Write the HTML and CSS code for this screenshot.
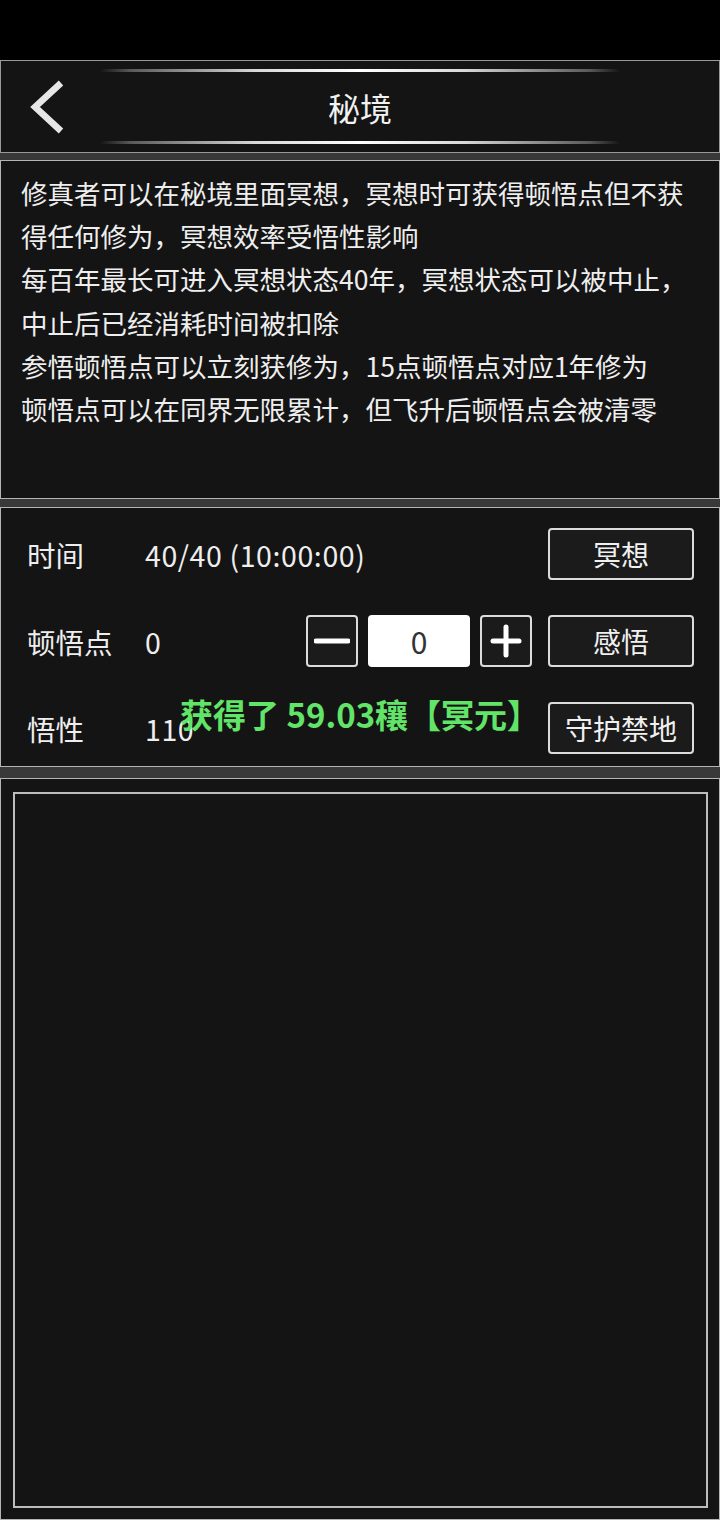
FILE: index.html
```html
<!DOCTYPE html>
<html lang="zh-CN">
<head>
    <meta charset="UTF-8">
    <meta name="viewport" content="width=device-width, initial-scale=1.0">
    <title>秘境</title>
    <link rel="stylesheet" href="styles.css">
</head>
<body>
    <!-- Status bar -->
    <div class="status-bar"></div>

    <div class="page">
        <!-- Title -->
        <header class="panel title-bar">
            <div class="glow-line"></div>
            <div class="title-row">
                <a class="back-btn" href="#">
                    <svg width="38" height="54" viewBox="0 0 38 54">
                        <polyline points="33,3 7,27 33,51" fill="none" stroke="#e6e6e6" stroke-width="6.5"/>
                    </svg>
                </a>
                <h1 class="title">秘境</h1>
                <span></span>
            </div>
            <div class="glow-line"></div>
        </header>

        <!-- Rules -->
        <section class="panel info">
            <p>
                修真者可以在秘境里面冥想，冥想时可获得顿悟点但不获<br>
                得任何修为，冥想效率受悟性影响<br>
                每百年最长可进入冥想状态40年，冥想状态可以被中止，<br>
                中止后已经消耗时间被扣除<br>
                参悟顿悟点可以立刻获修为，15点顿悟点对应1年修为<br>
                顿悟点可以在同界无限累计，但飞升后顿悟点会被清零
            </p>
        </section>

        <!-- Controls -->
        <section class="panel controls">
            <div class="row">
                <span class="label">时间</span>
                <span class="value">40/40 (10:00:00)</span>
                <button class="btn">冥想</button>
            </div>
            <div class="row">
                <span class="label">顿悟点</span>
                <span class="value">0</span>
                <div class="stepper">
                    <button class="step-btn">
                        <svg width="36" height="36" viewBox="0 0 36 36"><line x1="2" y1="18" x2="34" y2="18" stroke="#fff" stroke-width="5" stroke-linecap="round"/></svg>
                    </button>
                    <input class="count" type="text" value="0">
                    <button class="step-btn">
                        <svg width="36" height="36" viewBox="0 0 36 36"><line x1="5" y1="18" x2="31" y2="18" stroke="#fff" stroke-width="5" stroke-linecap="round"/><line x1="18" y1="4" x2="18" y2="32" stroke="#fff" stroke-width="5" stroke-linecap="round"/></svg>
                    </button>
                </div>
                <button class="btn">感悟</button>
            </div>
            <div class="row">
                <span class="label">悟性</span>
                <span class="value">110</span>
                <button class="btn">守护禁地</button>
            </div>

            <div class="toast">获得了 59.03穰【冥元】</div>
        </section>

        <!-- Log -->
        <section class="panel log">
            <div class="log-box"></div>
        </section>
    </div>
</body>
</html>
```

FILE: styles.css
```css
/* Base */
body {
    margin: 0;
    background-color: #000;
    color: #eee;
    font-family: "Noto Sans CJK SC", "Noto Sans", sans-serif;
}
.status-bar {
    height: 60px;
    background-color: #000;
}
.page {
    background-color: #393939;
    display: flex;
    flex-direction: column;
}
.panel {
    box-sizing: border-box;
    background-color: #141414;
    border: 1px solid #b4b4b4;
    position: relative;
}

/* Title bar */
.title-bar {
    height: 93px;
    display: flex;
    flex-direction: column;
    align-items: center;
    border-color: #9a9a9a;
}
.glow-line {
    width: 520px;
    height: 3px;
    margin: 8px 0;
    border-radius: 2px;
    background: linear-gradient(to right, rgba(255,255,255,0), #5a5a5a 6%, #d8d8d8 30%, #fff 50%, #d8d8d8 70%, #5a5a5a 94%, rgba(255,255,255,0));
}
.glow-line:first-child {
    margin-bottom: 0;
}
.glow-line:last-child {
    margin-top: 0;
}
.title-row {
    width: 100%;
    height: 69px;
    display: grid;
    grid-template-columns: 90px 1fr 90px;
    align-items: center;
}
.back-btn {
    display: flex;
    padding-left: 27px;
}
.title {
    margin: 0;
    text-align: center;
    font-size: 32px;
    font-weight: normal;
    color: #f2f2f2;
}

/* Rules text */
.info {
    height: 339px;
    margin-top: 7px;
    padding: 10px 20px;
}
.info p {
    margin: 0;
    font-size: 26.5px;
    line-height: 43.2px;
    color: #eee;
    white-space: nowrap;
}

/* Controls */
.controls {
    height: 260px;
    margin-top: 8px;
    padding: 20px 25px 0 26px;
    display: flex;
    flex-direction: column;
    gap: 35px;
}
.row {
    display: flex;
    align-items: center;
    height: 52px;
}
.label {
    width: 118px;
    font-size: 28.5px;
    color: #eee;
}
.value {
    flex: 1;
    font-size: 28.5px;
    letter-spacing: 0.6px;
    color: #eee;
}
.btn {
    box-sizing: border-box;
    width: 146px;
    height: 52px;
    margin-left: 16px;
    background-color: #1b1b1b;
    border: 2px solid #dcdcdc;
    border-radius: 4px;
    color: #f0f0f0;
    font-family: inherit;
    font-size: 28px;
    padding: 0;
}
.stepper {
    display: flex;
    gap: 10px;
}
.step-btn {
    box-sizing: border-box;
    width: 52px;
    height: 52px;
    padding: 0;
    display: flex;
    align-items: center;
    justify-content: center;
    background-color: #1b1b1b;
    border: 2px solid #dcdcdc;
    border-radius: 4px;
}
.count {
    box-sizing: border-box;
    width: 102px;
    height: 52px;
    border: none;
    border-radius: 4px;
    background-color: #fff;
    color: #333;
    text-align: center;
    font-family: inherit;
    font-size: 30px;
    padding: 0;
}
.toast {
    position: absolute;
    left: 179px;
    top: 186px;
    font-size: 33px;
    font-weight: bold;
    line-height: 40px;
    color: #62e468;
    white-space: nowrap;
}

/* Log area */
.log {
    height: 742px;
    margin-top: 11px;
    padding: 13px 11px 11px 12px;
    display: flex;
}
.log-box {
    flex: 1;
    border: 2px solid #bdbdbd;
}
```
